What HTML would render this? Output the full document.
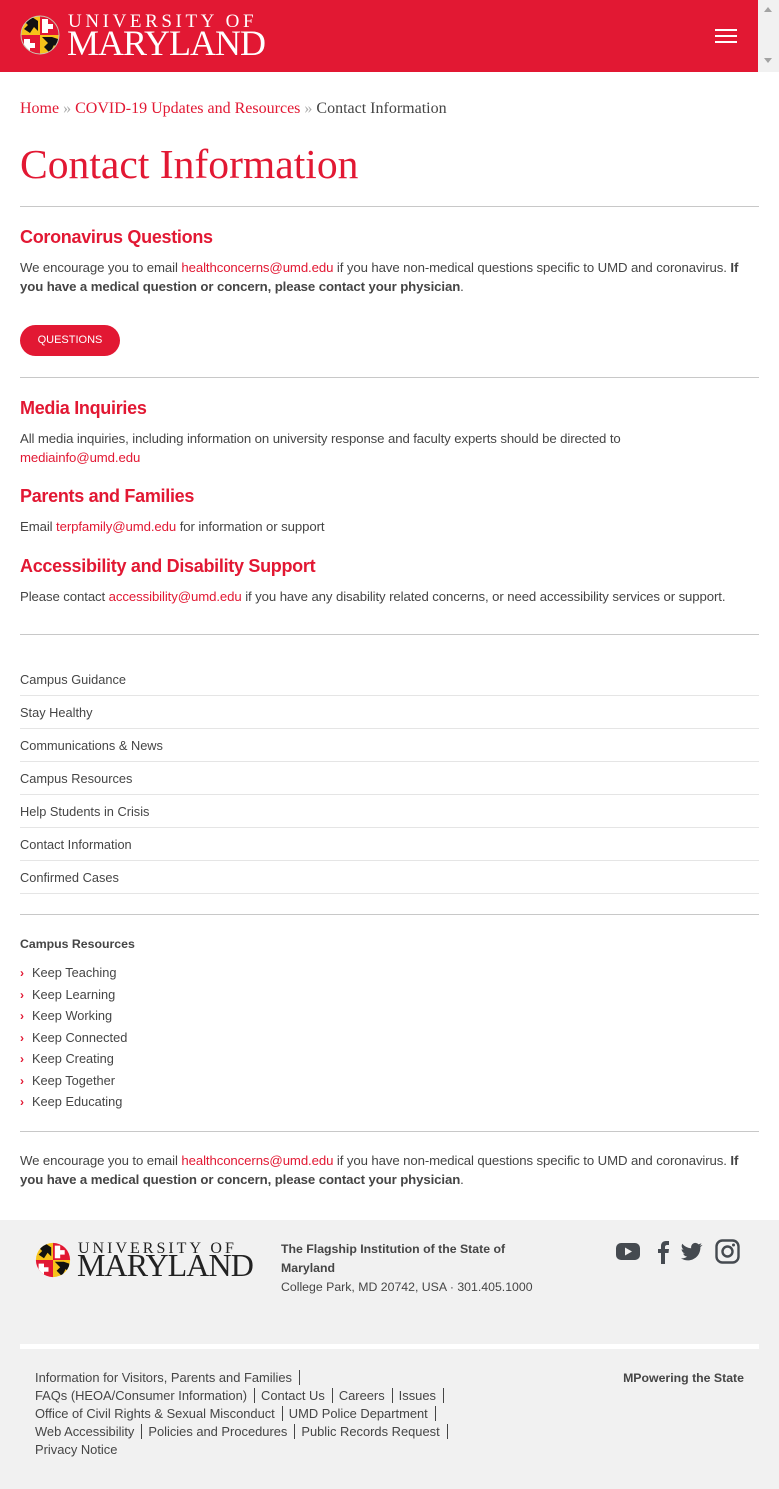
<!DOCTYPE html>
<html><head><meta charset="utf-8">
<style>
*{margin:0;padding:0;box-sizing:border-box}
html,body{width:779px;height:1489px;overflow:hidden;background:#fff}
body{position:relative;font-family:"Liberation Sans",Arial,sans-serif;color:#454545;font-size:13px}
.a{position:absolute;white-space:nowrap}
.r{color:#e21833}
.hdr{position:absolute;left:0;top:0;width:758px;height:72px;background:#e21833}
.sb{position:absolute;left:758px;top:0;width:21px;height:72px;background:#f1f1f1}
.serif{font-family:"Liberation Serif",serif}
.hr{position:absolute;left:20px;width:739px;height:1px;background:#c8c8c8}
.h2{font-weight:bold;font-size:18px;color:#e21833;letter-spacing:-0.3px;line-height:22px}
.p{font-size:13.2px;line-height:19px;letter-spacing:-0.1px}
.nav{position:absolute;left:20px;width:739px;height:33px;border-bottom:1px solid #e5e5e5;font-size:12.8px;line-height:33px}
.li{font-size:12.8px;line-height:18px}
.li:before{content:"›";color:#e21833;position:absolute;left:-12px;font-weight:bold;font-size:12px}
.ft{font-size:12.9px;line-height:18px;color:#454545}
.ft span{border-right:1px solid #454545;padding-right:7px;margin-right:6px}
</style></head><body>
<div class="hdr"></div>
<div class="sb"><div style="position:absolute;left:6px;top:7px;border:4px solid transparent;border-bottom:5px solid #a3a3a3;border-top:0"></div><div style="position:absolute;left:6px;top:58px;border:4px solid transparent;border-top:5px solid #a3a3a3;border-bottom:0"></div></div>
<svg class="a" style="left:20px;top:15px" width="40" height="40" viewBox="0 0 40 40">
<defs><clipPath id="c"><circle cx="20" cy="20" r="19"/></clipPath></defs>
<g clip-path="url(#c)"><rect width="40" height="40" fill="#f5f0e8"/>
<rect x="0" y="0" width="20" height="20" fill="#f6c21a"/><path d="M2 4 L8 10 L4 14 L10 18 L14 12 L18 16 L18 6 L12 2Z" fill="#111"/>
<rect x="20" y="0" width="20" height="20" fill="#e21833"/><path d="M22 4h6v5h5v5h-5v4h-6z" fill="#fff"/>
<rect x="0" y="20" width="20" height="20" fill="#e21833"/><path d="M4 24h6v4h5v5h-5v5h-6z" fill="#fff"/>
<rect x="20" y="20" width="20" height="20" fill="#f6c21a"/><path d="M22 22 L28 28 L24 32 L30 38 L34 30 L38 34 L38 24 L32 22Z" fill="#111"/></g>
<circle cx="20" cy="20" r="19" fill="none" stroke="#c9c2b0" stroke-width="1"/></svg>
<div class="a serif" style="left:68px;top:12px;color:#fff;font-size:19px;letter-spacing:3.6px;line-height:20px">UNIVERSITY OF</div>
<div class="a serif" style="left:67px;top:27px;color:#fff;font-size:36px;letter-spacing:-1px;line-height:32px">MARYLAND</div>
<div class="a" style="left:715px;top:29px;width:22px;height:2px;background:#fff;box-shadow:0 6px 0 #fff,0 12px 0 #fff"></div>

<div class="a serif" style="left:20px;top:99px;font-size:16px;line-height:20px;color:#454545"><span class="r">Home</span> <span style="color:#aaa">»</span> <span class="r">COVID-19 Updates and Resources</span> <span style="color:#aaa">»</span> Contact Information</div>
<div class="a serif r" style="left:20px;top:140px;font-size:41.6px;line-height:48px">Contact Information</div>
<div class="hr" style="top:206px"></div>

<div class="a h2" style="left:20px;top:226px">Coronavirus Questions</div>
<div class="a p" style="left:20px;top:258px">We encourage you to email <span class="r">healthconcerns@umd.edu</span> if you have non-medical questions specific to UMD and coronavirus. <b>If</b><br><b>you have a medical question or concern, please contact your physician</b>.</div>
<div class="a" style="left:20px;top:325px;width:100px;height:31px;border-radius:16px;background:#e21833;color:#fff;font-size:11px;text-align:center;line-height:31px">QUESTIONS</div>
<div class="hr" style="top:377px"></div>

<div class="a h2" style="left:20px;top:397px">Media Inquiries</div>
<div class="a p" style="left:20px;top:429px">All media inquiries, including information on university response and faculty experts should be directed to<br><span class="r">mediainfo@umd.edu</span></div>
<div class="a h2" style="left:20px;top:485px">Parents and Families</div>
<div class="a p" style="left:20px;top:517px">Email <span class="r">terpfamily@umd.edu</span> for information or support</div>
<div class="a h2" style="left:20px;top:555px">Accessibility and Disability Support</div>
<div class="a p" style="left:20px;top:587px">Please contact <span class="r">accessibility@umd.edu</span> if you have any disability related concerns, or need accessibility services or support.</div>
<div class="hr" style="top:634px"></div>

<div class="nav" style="top:663px">Campus Guidance</div>
<div class="nav" style="top:696px">Stay Healthy</div>
<div class="nav" style="top:729px">Communications &amp; News</div>
<div class="nav" style="top:762px">Campus Resources</div>
<div class="nav" style="top:795px">Help Students in Crisis</div>
<div class="nav" style="top:828px">Contact Information</div>
<div class="nav" style="top:861px">Confirmed Cases</div>
<div class="hr" style="top:914px"></div>

<div class="a" style="left:20px;top:936px;font-weight:bold;font-size:12.3px;line-height:16px">Campus Resources</div>
<div class="a li" style="left:32px;top:964px">Keep Teaching</div>
<div class="a li" style="left:32px;top:986px">Keep Learning</div>
<div class="a li" style="left:32px;top:1007px">Keep Working</div>
<div class="a li" style="left:32px;top:1029px">Keep Connected</div>
<div class="a li" style="left:32px;top:1050px">Keep Creating</div>
<div class="a li" style="left:32px;top:1072px">Keep Together</div>
<div class="a li" style="left:32px;top:1093px">Keep Educating</div>
<div class="hr" style="top:1131px"></div>
<div class="a p" style="left:20px;top:1151px">We encourage you to email <span class="r">healthconcerns@umd.edu</span> if you have non-medical questions specific to UMD and coronavirus. <b>If</b><br><b>you have a medical question or concern, please contact your physician</b>.</div>

<div class="a" style="left:0;top:1220px;width:779px;height:269px;background:#f1f1f1"></div>
<svg class="a" style="left:35px;top:1242px" width="36" height="36" viewBox="0 0 40 40">
<g clip-path="url(#c)"><rect width="40" height="40" fill="#f5f0e8"/>
<rect x="0" y="0" width="20" height="20" fill="#f6c21a"/><path d="M2 4 L8 10 L4 14 L10 18 L14 12 L18 16 L18 6 L12 2Z" fill="#111"/>
<rect x="20" y="0" width="20" height="20" fill="#e21833"/><path d="M22 4h6v5h5v5h-5v4h-6z" fill="#fff"/>
<rect x="0" y="20" width="20" height="20" fill="#e21833"/><path d="M4 24h6v4h5v5h-5v5h-6z" fill="#fff"/>
<rect x="20" y="20" width="20" height="20" fill="#f6c21a"/><path d="M22 22 L28 28 L24 32 L30 38 L34 30 L38 34 L38 24 L32 22Z" fill="#111"/></g></svg>
<div class="a serif" style="left:78px;top:1241px;color:#222;font-size:16px;letter-spacing:3px;line-height:16px">UNIVERSITY OF</div>
<div class="a serif" style="left:77px;top:1251px;color:#222;font-size:32px;letter-spacing:-0.9px;line-height:28px">MARYLAND</div>
<div class="a" style="left:281px;top:1240px;font-size:12.3px;line-height:19px;color:#454545"><b>The Flagship Institution of the State of<br>Maryland</b><br>College Park, MD 20742, USA · 301.405.1000</div>
<svg class="a" style="left:614px;top:1238px" width="128" height="28" viewBox="0 0 128 28">
<rect x="2" y="5" width="24" height="17" rx="5" fill="#454a50"/><path d="M11 9.5v8l7-4z" fill="#f1f1f1"/>
<path d="M47 26V15h-3v-4h3V8c0-3 2-5 5-5h3v4h-2c-1 0-2 .5-2 2v2h4l-.5 4H51v11z" fill="#454a50"/>
<path d="M88 7c-.8.4-1.6.6-2.5.7.9-.5 1.6-1.4 1.9-2.4-.9.5-1.8.9-2.8 1.1a4.3 4.3 0 0 0-7.4 3.9c-3.6-.2-6.8-1.900-8.9-4.5-1.2 2-.6 4.5 1.3 5.8-.7 0-1.4-.2-2-.5 0 2.1 1.5 3.9 3.5 4.300-.6.2-1.3.2-2 .1.6 1.7 2.2 3 4.1 3a8.7 8.7 0 0 1-6.4 1.8c8.5 5.4 19.9-.2 19.6-11.3.9-.6 1.6-1.3 2.1-2.1z" fill="#454a50"/>
<rect x="102.5" y="2.5" width="22" height="22" rx="6" fill="none" stroke="#454a50" stroke-width="2.4"/><circle cx="113.5" cy="13.5" r="5" fill="none" stroke="#454a50" stroke-width="2.4"/><circle cx="119.5" cy="7" r="1.5" fill="#454a50"/></svg>
<div class="a" style="left:20px;top:1344px;width:739px;height:5px;background:#fff"></div>
<div class="a ft" style="left:35px;top:1369px"><span>Information for Visitors, Parents and Families</span><br><span>FAQs (HEOA/Consumer Information)</span><span>Contact Us</span><span>Careers</span><span>Issues</span><br><span>Office of Civil Rights &amp; Sexual Misconduct</span><span>UMD Police Department</span><br><span>Web Accessibility</span><span>Policies and Procedures</span><span>Public Records Request</span><br>Privacy Notice</div>
<div class="a" style="right:35px;top:1369px;font-weight:bold;font-size:12.3px;line-height:18px">MPowering the State</div>
</body></html>
